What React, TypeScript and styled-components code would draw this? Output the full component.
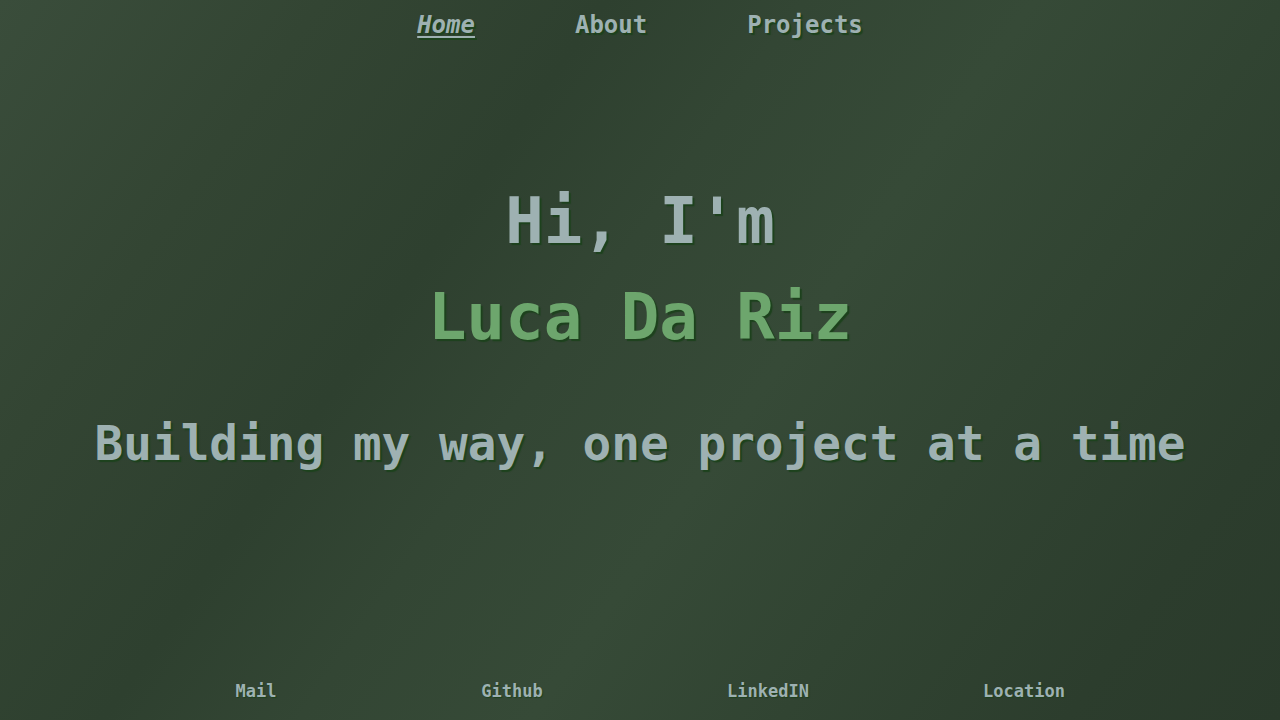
import React from "react";
import styled, { createGlobalStyle } from "styled-components";

const Global = createGlobalStyle`
  html, body {
    margin: 0;
    padding: 0;
  }
  body {
    background: #324432;
    font-family: "DejaVu Sans Mono", "Liberation Mono", monospace;
  }
`;

const Page = styled.div`
  min-height: 100vh;
  display: flex;
  flex-direction: column;
  background: linear-gradient(
    125deg,
    #3a4d3b 0%,
    #334533 18%,
    #2e402f 34%,
    #334634 45%,
    #364a37 58%,
    #314432 72%,
    #2c3d2d 88%,
    #2a3a2b 100%
  );
  color: #9eb1b2;
`;

const Nav = styled.nav`
  display: flex;
  justify-content: center;
  gap: 100px;
  padding-top: 11px;
`;

const NavLink = styled.a<{ $active?: boolean }>`
  font-size: 24px;
  line-height: 28px;
  font-weight: 700;
  color: #9eb1b2;
  text-decoration: ${(p) => (p.$active ? "underline" : "none")};
  text-underline-offset: 3px;
  text-decoration-thickness: 2px;
  font-style: ${(p) => (p.$active ? "italic" : "normal")};
  text-shadow: 2px 2px 1px #1d421d;
  cursor: pointer;
`;

const Hero = styled.main`
  display: flex;
  flex-direction: column;
  align-items: center;
  padding-top: 134px;
`;

const Title = styled.h1<{ $accent?: boolean }>`
  margin: 0;
  font-size: 64px;
  line-height: 96px;
  font-weight: 700;
  color: ${(p) => (p.$accent ? "#6da66d" : "#9eb1b2")};
  text-shadow: 2px 2px 1px #1d421d;
`;

const Subtitle = styled.h2`
  margin: 50px 0 0;
  font-size: 47.7px;
  line-height: 57.6px;
  font-weight: 700;
  color: #9eb1b2;
  text-shadow: 2px 2px 1px #1d421d;
`;

const Footer = styled.footer`
  margin-top: auto;
  display: grid;
  grid-template-columns: repeat(4, 256px);
  justify-content: center;
  padding-bottom: 19px;
`;

const FooterLink = styled.a`
  text-align: center;
  font-size: 17px;
  line-height: 20px;
  font-weight: 700;
  color: #9eb1b2;
  text-shadow: 1px 1px 1px #1d421d;
  cursor: pointer;
`;

export default function App() {
  return (
    <>
      <Global />
      <Page>
        <Nav>
          <NavLink $active>Home</NavLink>
          <NavLink>About</NavLink>
          <NavLink>Projects</NavLink>
        </Nav>
        <Hero>
          <Title>Hi, I'm</Title>
          <Title $accent>Luca Da Riz</Title>
          <Subtitle>Building my way, one project at a time</Subtitle>
        </Hero>
        <Footer>
          <FooterLink>Mail</FooterLink>
          <FooterLink>Github</FooterLink>
          <FooterLink>LinkedIN</FooterLink>
          <FooterLink>Location</FooterLink>
        </Footer>
      </Page>
    </>
  );
}
